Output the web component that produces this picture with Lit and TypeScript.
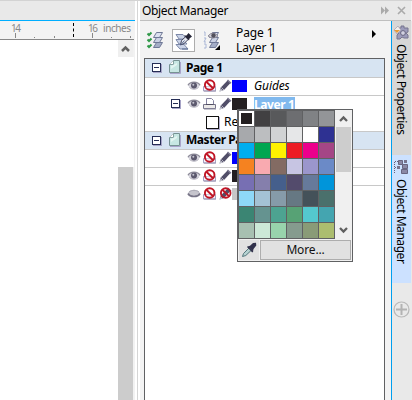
import { LitElement, html, css, svg, nothing } from "lit";
import { customElement, property } from "lit/decorators.js";

const palette: string[][] = [
  ["#231f20", "#414042", "#58595b", "#6d6e71", "#808285", "#939598"],
  ["#a7a9ac", "#bcbec0", "#d1d3d4", "#e6e7e8", "#ffffff", "#2e3192"],
  ["#00aeef", "#00a651", "#fff200", "#ed1c24", "#ec008c", "#a54686"],
  ["#f58220", "#f9aab0", "#836b63", "#c7c5e3", "#9b96cc", "#6b8ac7"],
  ["#776fb3", "#857fac", "#455f8c", "#534b6c", "#667a9b", "#0095da"],
  ["#8ed8f8", "#a4c2d5", "#869ba9", "#667883", "#445159", "#4a706c"],
  ["#3b8573", "#659390", "#4da391", "#57a275", "#54c8ce", "#44a5b0"],
  ["#a7c0b1", "#cce8d7", "#98d3ac", "#859b8e", "#899b77", "#acbd6f"],
];

const ban = svg`<circle cx="6.7" cy="6" r="4.8" fill="none" stroke="#c01525" stroke-width="1.9"/><path d="M3.4 2.8 10 9.2" stroke="#c01525" stroke-width="1.9"/>`;
const pencil = svg`<path d="M.5 12.5 1.8 8.5 8.5 1.5 11.5 4 5 11Z" fill="#514e68"/><path d="M8.5 1 12 4.2" stroke="#77748c" stroke-width="1.5"/><path d="M.5 12.5 1.8 9.5 4 11.5Z" fill="#c6c6d0"/><path d="M2.5 8.5 5 11" stroke="#e0e0e8" stroke-width=".7"/>`;
const sheet = (x: number, y: number, fill: string) =>
  svg`<path d="M${x + 3} ${y}H${x + 9}L${x + 6} ${y + 5}H${x}Z" fill=${fill} stroke="#6f7896"/>`;
const sheets = svg`${sheet(6.5, 11.5, "#a4adc6")}${sheet(6.5, 6.5, "#ccd2e4")}${sheet(6.5, 1.5, "#dce1ef")}`;

const icons: Record<string, { w: number; h: number; art: unknown }> = {
  eye: { w: 14, h: 13, art: svg`<path d="M1 6.5C3 2 11 2 13 6.5 10 11 4 11 1 6.5Z" fill="#d5d4dc"/><path d="M1 6.3C3 2 11 2 13 6.3" fill="none" stroke="#8d8b99" stroke-width="1.3"/><path d="M2.5 8.5C5 10.7 9 10.7 11.5 8.5" fill="none" stroke="#aaa8b5"/><circle cx="7" cy="6.5" r="3" fill="#5c596e"/><circle cx="6.3" cy="5.8" r="1" fill="#c9c8d2"/>` },
  closed: { w: 14, h: 13, art: svg`<path d="M1 6C3 1.8 11 1.8 13 6 11 10.8 3 10.8 1 6Z" fill="#c6c5cd"/><path d="M1 6.5C3 10.5 11 10.5 13 6.5" fill="none" stroke="#777487" stroke-width="1.7"/><path d="M2 5C5 2.8 9 2.8 12 5" fill="none" stroke="#aaa9b4"/>` },
  print: { w: 14, h: 13, art: svg`<path d="M3.5 7.5V1.5H8.5L10.5 3.5V7.5" fill="#fff" stroke="#8583a0"/><path d="M.5 7.5H12.5V11.5H.5Z" fill="#eceae9" stroke="#77758a"/><path d="M3 7.5H10.5" stroke="#504e61"/><path d="M1 12H13" stroke="#8d8ba0"/>` },
  noprint: { w: 14, h: 13, art: svg`<path d="M.5 7.5H12.5V12H.5Z" fill="#f5f3fc" stroke="#a6a1bf"/><path d="M3.5 7.5V1.5H10.5V7.5" fill="#fff"/><path d="M1 12H13" stroke="#9b95b4"/>${ban}` },
  pencil: { w: 13, h: 13, art: pencil },
  nopencil: { w: 13, h: 13, art: svg`${pencil}${ban}` },
  page: { w: 13, h: 15, art: svg`<path d="M4.5.5H10.5V12.5H.5V4.5Z" fill="#c7e7e3" stroke="#769293"/><path d="M4.5.5V4.5H.5" fill="#fff" stroke="#87a2a3"/><path d="M1 13.5H11.5V2" fill="none" stroke="#aaa5cb"/><path d="M2 6 8 3V5L2 9Z" fill="#e4f5f2"/>` },
  props: { w: 17, h: 18, art: svg`${sheets}<path d="M.5 2.5 2 4 4.5 1.5M.5 8.5 2 10 4.5 7.5M.5 14.5 2 16 4.5 13.5" fill="none" stroke="#2f9848" stroke-width="2"/>` },
  edit: { w: 17, h: 18, art: svg`<path d="M1 2.5H8L12 7H4ZM1 7.5H8L12 12H4ZM1 12.5H9L13 17H5Z" fill="#cbd4e8" stroke="#7c88a8"/><path d="M5.5 13 6.5 8.5 10.5 4.8 13.2 7.5 9 11.5Z" fill="#e4e7f0" stroke="#42455d"/><path d="M9 3.5 11.5 3.5 13.5 1 17 4.5 14.5 6.5 14 8.5Z" fill="#252638"/><path d="M5.5 13 9.5 8.5M7 17H13" stroke="#596c93"/>` },
  view: { w: 19, h: 20, art: svg`${sheets}<path d="M1 1H2V5M1 7H3L1 11H3M1 13H3V17H1" fill="none" stroke="#a9b6d6"/><path d="M5 5Q10-1 15 5Q10 9 5 5Z" fill="#d0d0d8" stroke="#8f8c9a"/><circle cx="10.5" cy="4.5" r="2.2" fill="#52505c"/><path d="M17 14V19H12Z" fill="#000"/>` },
  dropper: { w: 16, h: 16, art: svg`<path d="M1.5 14.5 2.5 11.5 8 6 10.3 8.3 4.8 13.5Z" fill="#b6d2d1" stroke="#54777c"/><path d="M7 4.5 9 3.8 12 1 15 .8 15.3 3.5 12.5 7 12 9.5Z" fill="#30304a"/><path d="M6.5 4.5 11.8 10" stroke="#30304a" stroke-width="1.5"/>` },
  bucket: { w: 16, h: 16, art: svg`<path d="M4 4H8V2H11V4H15V8L13 9 15 11V14H11L9 13 7 15H4V11L6 9 4 7Z" fill="#9c9bba" stroke="#77758f"/><circle cx="10" cy="9" r="2.4" fill="#d2d1e1" stroke="#66647f"/><path d="M1 6 5 2 8 6 4 10Z" fill="#f3eee8" stroke="#a29caf" stroke-width=".7"/><path d="M1 6H7L4 9Z" fill="#e59b3c"/>` },
  tree: { w: 16, h: 16, art: svg`<path d="M1.5 3V14M2 2.5H6M2 8.5H8" stroke="#64617d" stroke-dasharray="1 1"/><path d="M5.5 1.5H9.5V5.5H5.5ZM9.5 5.5H14.5V9.5H9.5ZM8.5 10.5H14.5V14.5H8.5Z" fill="#8b88a5" stroke="#686580"/><path d="M11 1H14V4H11ZM4 7H7V10H4Z" fill="#77738d"/>` },
};

@customElement("ui-icon")
class UiIcon extends LitElement {
  @property() name = "";
  static styles = css`:host { display: block; flex: none; } svg { display: block; overflow: visible; }`;
  render() {
    const i = icons[this.name];
    return i ? html`<svg width=${i.w} height=${i.h} viewBox="0 0 ${i.w} ${i.h}" fill="none">${i.art}</svg>` : nothing;
  }
}

@customElement("color-popup")
class ColorPopup extends LitElement {
  static styles = css`
    :host { display: block; box-sizing: border-box; width: 116px; height: 153px; border: 1px solid #606163; background: #f0f0f0; font: 12px "Noto Sans", sans-serif; color: #111; }
    .top { display: flex; height: 129px; }
    .grid { display: grid; grid-template-columns: repeat(6, 15px); grid-auto-rows: 15px; gap: 1px; padding: 1px; background: #606163; width: 95px; height: 127px; }
    .on { outline: 2px solid #fff; outline-offset: -2px; position: relative; }
    .on::after { content: ""; position: absolute; inset: 1px; border: 1px dotted #fff; background: #231f20; background-clip: padding-box; }
    .bar { width: 15px; margin-left: 1px; display: flex; flex-direction: column; }
    .bar svg { display: block; width: 15px; height: 17px; }
    .thumb { height: 45px; background: #cdcdcd; }
    .rest { flex: 1; }
    .bottom { display: flex; gap: 1px; height: 22px; box-sizing: border-box; padding: 1px; }
    .pick { width: 20px; display: grid; place-items: center; background: #e1e1e1; }
    .more { flex: 1; border: 1px solid #adadad; background: #e1e1e1; text-align: center; line-height: 18px; letter-spacing: -.15px; }
  `;
  render() {
    return html`<div class="top">
        <div class="grid">${palette.flat().map((c, i) => html`<div class=${i ? "" : "on"} style="background:${c}"></div>`)}</div>
        <div class="bar">
          <svg viewBox="0 0 15 17"><path d="M4 11 7.5 7.5 11 11" fill="none" stroke="#606060" stroke-width="2.3"/></svg>
          <div class="thumb"></div><div class="rest"></div>
          <svg viewBox="0 0 15 17"><path d="M4 6 7.5 9.5 11 6" fill="none" stroke="#606060" stroke-width="2.3"/></svg>
        </div>
      </div>
      <div class="bottom"><div class="pick"><ui-icon name="dropper"></ui-icon></div><div class="more">More...</div></div>`;
  }
}

@customElement("app-root")
class AppRoot extends LitElement {
  static styles = css`
    :host { display: flex; width: 412px; height: 400px; box-sizing: border-box; border-top: 1px solid #d3d3d3; overflow: hidden; background: #fff; font: 12px "Noto Sans", sans-serif; color: #000; }
    * { box-sizing: border-box; }
    .work { width: 137px; padding-right: 2px; flex: none; display: flex; flex-direction: column; }
    .band { height: 20px; background: #e9e9e9; border-bottom: 1px solid #00aeff; flex: none; }
    .ruler { height: 19px; background: #f3f3f3; flex: none; }
    .ruler svg, .gut svg { display: block; }
    .ruler text { font: 10px "Noto Sans", sans-serif; fill: #888; }
    .canvas { flex: 1; display: flex; justify-content: flex-end; }
    .gut { width: 17px; background: linear-gradient(to right, #efefef 15px, #f2f2f2 15px); }
    .gap { height: 110px; background: #fff; width: 16px; }
    .up { height: 17px; }
    .thumb { width: 15px; height: 233px; background: #ccc; }
    .split { width: 3px; border-left: 1px solid #d5d5d5; flex: none; }
    .docker { flex: 1; display: flex; flex-direction: column; background: #f3f3f3; min-width: 0; }
    .title { height: 20px; flex: none; display: flex; justify-content: space-between; background: #e9e9e9; border-bottom: 1px solid #bfbfbf; padding: 0 5px 0 2px; line-height: 19px; width: 271px; }
    .title span { letter-spacing: -.33px; }
    .title svg { display: block; }
    .body { flex: 1; display: flex; }
    .main { width: 251px; padding: 0 6px 0 4px; display: flex; flex-direction: column; flex: none; }
    .tools { height: 37px; display: flex; padding: 8px 9px 0 3px; flex: none; }
    .tools > ui-icon { margin-top: 2px; }
    .press { width: 23px; height: 23px; border: 1px solid #adadad; background: #fff; margin: 0 8px; padding: 2px; flex: none; }
    .where { line-height: 14px; margin: -3px 0 0 14px; flex: 1; letter-spacing: -.1px; white-space: nowrap; display: grid; grid-auto-rows: 15px; align-content: start; }
    .list { position: relative; flex: 1; border: 1px solid #606163; border-bottom: 0; background: #fff; }
    .row { height: 18px; border-bottom: 1px solid #c8c8c8; display: flex; align-items: center; white-space: nowrap; line-height: 16px; }
    .row.first { height: 19px; }
    .row.open { border-color: transparent; }
    .head { background: #d7e4f2; font-weight: bold; padding-left: 7px; letter-spacing: -.45px; padding-bottom: 1px; }
    .head ui-icon { margin: 0 4px 0 8px; }
    .layer { padding: 0 0 2px 42px; }
    .layer.kid { padding-left: 26px; }
    .layer ui-icon { margin-right: 2px; }
    .layer ui-icon:nth-of-type(3) { margin-right: 0; }
    .kid .box { margin-right: 7px; }
    .box { width: 9px; height: 9px; border: 1px solid #252d55; background: #fff; box-shadow: 1px 1px #a7a4c7; display: grid; place-items: center; flex: none; }
    .box::after { content: ""; width: 5px; height: 1px; background: #252d55; }
    .sw { width: 15px; height: 12px; margin-right: 7px; flex: none; }
    .blue { background: #00f; } .black { background: #231f20; } .gray { background: #c7c7c7; }
    .it { font-style: italic; letter-spacing: -.1px; }
    .sel { font-weight: bold; color: #fff; background: #80b9ee; height: 15px; line-height: 15px; padding-right: 1px; letter-spacing: -.4px; margin-top: 1px; }
    .obj { padding: 0 0 1px 61px; gap: 5px; }
    .shape { width: 13px; height: 13px; border: 1px solid #111; background: #fff; box-shadow: 1px 1px #b2afd0; }
    color-popup { position: absolute; left: 92px; top: 50px; }
    .tabs { width: 21px; border-left: 1px solid #009fef; background: linear-gradient(to right, #e9e9e9 20px, #d7d7d7 20px); display: flex; flex-direction: column; }
    .tab { width: 19px; display: flex; flex-direction: column; align-items: center; background: #d7d7d7; height: 134px; padding: 3px 1px 0 0; }
    .tab.on { background: #cce1ff; height: 128px; padding-top: 4px; }
    .tab span { writing-mode: vertical-rl; line-height: 17px; margin-top: 4px; font-size: 12px; white-space: nowrap; letter-spacing: -.45px; }
    .plus { margin: 18px 0 0 1px; display: block; }
  `;
  layer(eye: string, pr: string, pen: string, color: string, label: unknown = nothing, kid = false) {
    return html`<div class="row layer ${kid ? "kid open" : ""}">${kid ? html`<i class="box"></i>` : nothing}
      <ui-icon name=${eye}></ui-icon><ui-icon name=${pr}></ui-icon><ui-icon name=${pen}></ui-icon><i class="sw ${color}"></i>${label}</div>`;
  }
  head(label: string, cls = "") {
    return html`<div class="row head ${cls}"><i class="box"></i><ui-icon name="page"></ui-icon>${label}</div>`;
  }
  render() {
    return html`
      <div class="work">
        <div class="band"></div>
        <div class="ruler"><svg width="134" height="19">
          <path d="M0 18.5H134" stroke="#888"/>
          <path d="M15.5 12V17M92.5 12V17M34.5 16V17M54.5 15V17M111.5 16V17M130.5 15V17" stroke="#888"/>
          <path d="M73.5 2V17" stroke="#000" stroke-dasharray="3 2.5"/>
          <text x="11" y="11" textLength="10">14</text><text x="88" y="11" textLength="10">16</text><text x="103" y="11" textLength="28">inches</text>
        </svg></div>
        <div class="canvas"><div class="gut">
          <svg class="up" width="15" height="17"><path d="M4 11 7.5 7.5 11 11" fill="none" stroke="#606060" stroke-width="2.5"/></svg>
          <div class="gap"></div><div class="thumb"></div>
        </div></div>
      </div>
      <div class="split"></div>
      <div class="docker">
        <div class="title"><span>Object Manager</span>
          <svg width="26" height="19"><path d="M1 5.5 5 9.5 1 13.5ZM5 5.5 9 9.5 5 13.5Z" fill="#aaa"/><path d="M18 6 25 13M25 6 18 13" stroke="#aaa" stroke-width="1.6"/></svg>
        </div>
        <div class="body">
          <div class="main">
            <div class="tools">
              <ui-icon name="props"></ui-icon><div class="press"><ui-icon name="edit"></ui-icon></div><ui-icon name="view"></ui-icon>
              <div class="where"><span>Page 1</span><span>Layer 1</span></div>
              <svg width="5" height="9"><path d="M1 1V9L5 5Z" fill="#000"/></svg>
            </div>
            <div class="list">
              ${this.head("Page 1", "first")}
              ${this.layer("eye", "noprint", "pencil", "blue", html`<span class="it">Guides</span>`)}
              ${this.layer("eye", "print", "pencil", "black", html`<span class="sel">Layer 1</span>`, true)}
              <div class="row obj"><i class="shape"></i>Rectangle</div>
              ${this.head("Master Page")}
              ${this.layer("eye", "noprint", "pencil", "blue")}
              ${this.layer("eye", "noprint", "pencil", "black")}
              <div class="row layer open">
                <ui-icon name="closed"></ui-icon><ui-icon name="noprint"></ui-icon><ui-icon name="nopencil"></ui-icon><i class="sw gray"></i>
              </div>
              <color-popup></color-popup>
            </div>
          </div>
          <div class="tabs">
            <div class="tab"><ui-icon name="bucket"></ui-icon><span>Object Properties</span></div>
            <div class="tab on"><ui-icon name="tree"></ui-icon><span>Object Manager</span></div>
            <svg class="plus" width="17" height="17"><circle cx="8.5" cy="8.5" r="7.5" fill="none" stroke="#b8b8b8" stroke-width="1.2"/><path d="M3 8.5H14M8.5 3V14" stroke="#b3b3b3" stroke-width="2"/></svg>
          </div>
        </div>
      </div>`;
  }
}
